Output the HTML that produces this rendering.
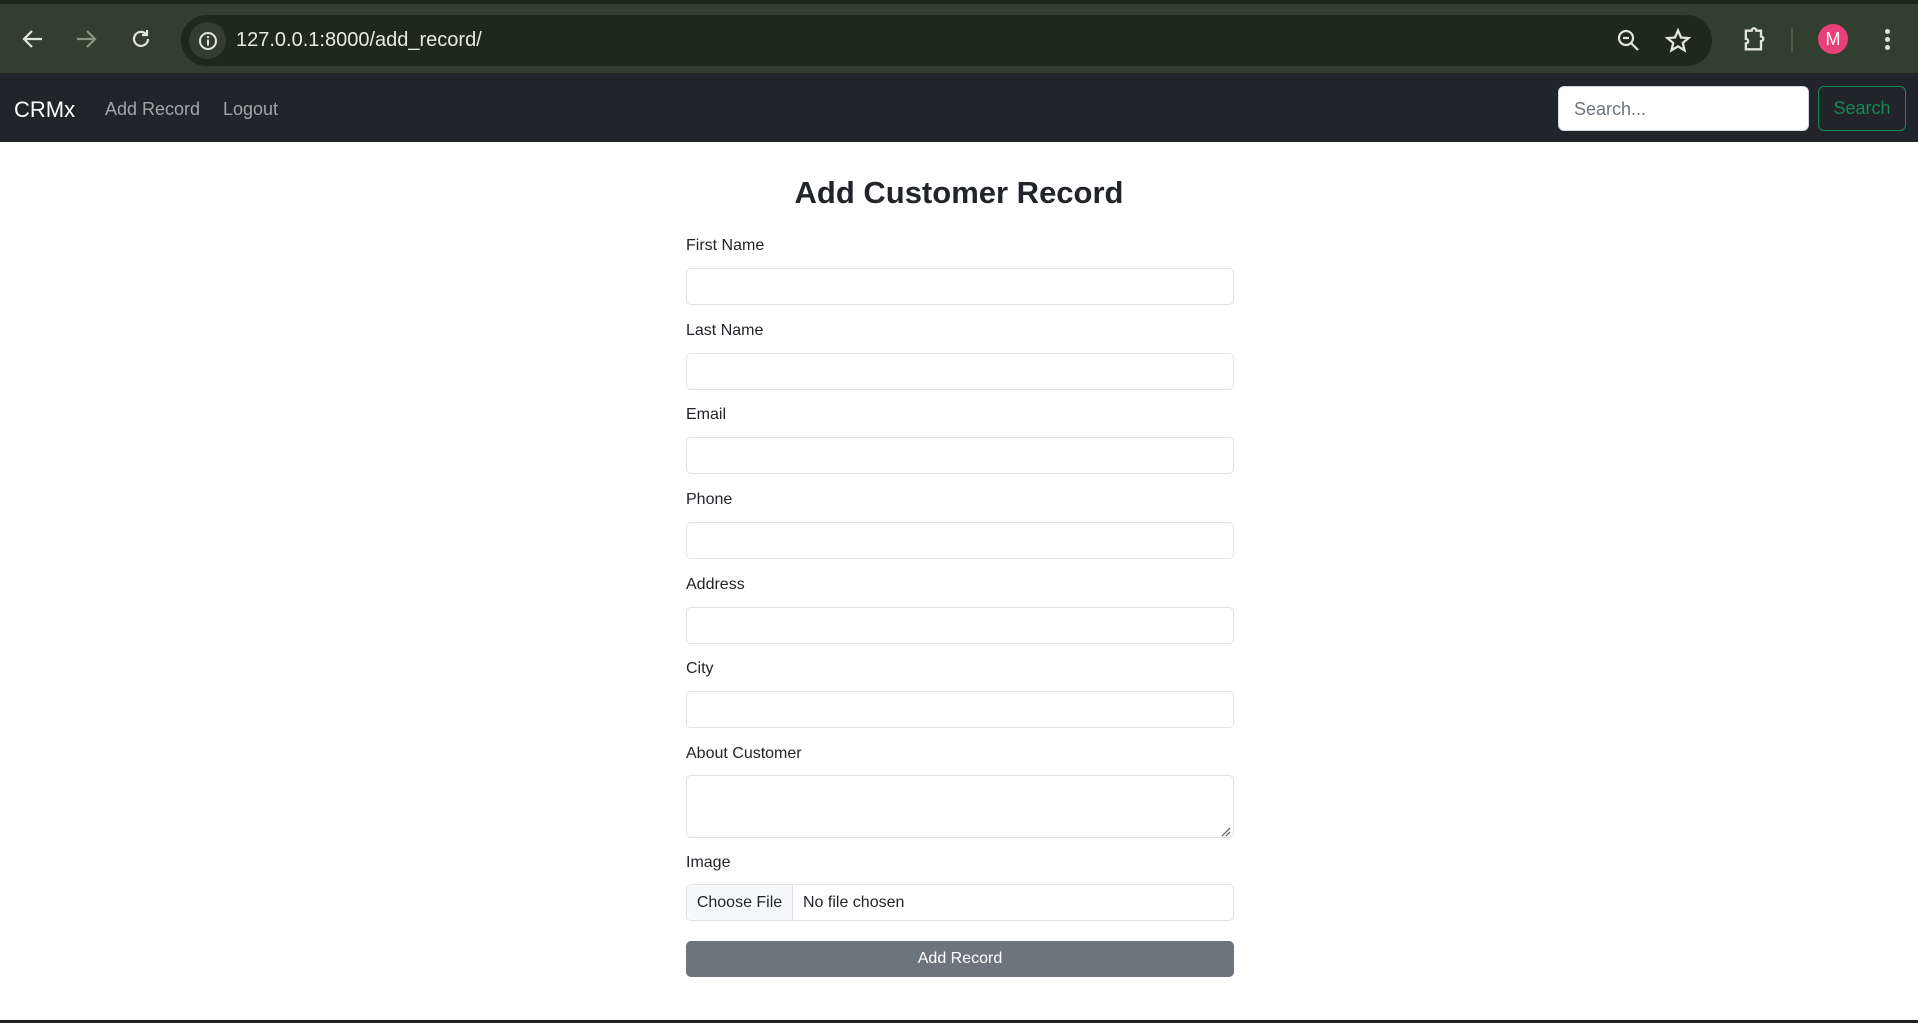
<!DOCTYPE html>
<html><head><meta charset="utf-8"><style>
*{box-sizing:border-box;margin:0;padding:0}
body{width:1918px;height:1023px;overflow:hidden;background:#fff;font-family:"Liberation Sans",sans-serif;position:relative;color:#212529}
.top{position:absolute;left:0;top:0;width:1918px;height:73px;background:#333f2e;border-top:4px solid #1c2617}
.addr{position:absolute;left:181px;top:11px;width:1531px;height:51px;background:#1e2a19;border-radius:26px}
.addr .ic{position:absolute;left:8px;top:7px;width:37px;height:37px;border-radius:50%;background:#333f2e}
.url{position:absolute;left:55px;top:14px;color:#e6eadf;font-size:20px}
.nav{position:absolute;left:0;top:73px;width:1918px;height:69px;background:#212529}
.nav span{position:absolute;top:26px;font-size:18px;color:#a2a5a8}
.in{position:absolute;left:686px;width:548px;height:37px;border:1px solid #dee2e6;border-radius:5px;background:#fff}
.lb{position:absolute;left:686px;font-size:16px;color:#212529}
svg{position:absolute}
</style></head><body>
<div class="top">
<div class="addr"><div class="ic"></div>
<svg style="left:17px;top:16px" width="20" height="20" viewBox="0 0 20 20"><circle cx="10" cy="10" r="8" fill="none" stroke="#dfe5d8" stroke-width="2"/><rect x="9" y="8.5" width="2" height="6" fill="#dfe5d8"/><rect x="9" y="5" width="2" height="2" fill="#dfe5d8"/></svg>
<div class="url">127.0.0.1:8000/add_record/</div>
<svg style="left:1435px;top:13px" width="26" height="26" viewBox="0 0 26 26"><circle cx="10" cy="10" r="7" fill="none" stroke="#dfe5d8" stroke-width="2.2"/><path d="M15 15l7 7M7 10h6" stroke="#dfe5d8" stroke-width="2.2"/></svg>
<svg style="left:1483px;top:12px" width="28" height="28" viewBox="0 0 24 24"><path d="M12 3l2.6 6 6.4.5-4.9 4.2 1.5 6.3L12 16.6 6.4 20l1.5-6.3L3 9.5l6.4-.5z" fill="none" stroke="#dfe5d8" stroke-width="2"/></svg>
</div>
<svg style="left:22px;top:24px" width="22" height="22" viewBox="0 0 22 22"><path d="M20 11H3M10 3l-8 8 8 8" fill="none" stroke="#dfe5d8" stroke-width="2.2"/></svg>
<svg style="left:75px;top:24px" width="22" height="22" viewBox="0 0 22 22"><path d="M2 11h17M12 3l8 8-8 8" fill="none" stroke="#8a9483" stroke-width="2.2"/></svg>
<svg style="left:130px;top:24px" width="22" height="22" viewBox="0 0 22 22"><path d="M18 11a7 7 0 1 1-2-5" fill="none" stroke="#dfe5d8" stroke-width="2.2"/><path d="M17 2v5h-5" fill="none" stroke="#dfe5d8" stroke-width="2.2"/></svg>
<svg style="left:1740px;top:22px" width="28" height="28" viewBox="0 0 24 24"><path d="M5 4h5a2 2 0 0 1 4 0h4v5a2 2 0 0 1 0 4v7H5v-5a2 2 0 0 0 0-4z" fill="none" stroke="#dfe5d8" stroke-width="2"/></svg>
<div style="position:absolute;left:1791px;top:24px;width:2px;height:24px;background:#4f5a49"></div>
<div style="position:absolute;left:1818px;top:20px;width:30px;height:30px;border-radius:50%;background:#e8407a;color:#fff;font-size:18px;text-align:center;line-height:30px">M</div>
<div style="position:absolute;left:1885px;top:25px;width:5px;height:5px;border-radius:50%;background:#dfe5d8;box-shadow:0 8px 0 #dfe5d8,0 16px 0 #dfe5d8"></div>
</div>
<div class="nav">
<span style="left:14px;top:24px;font-size:22px;color:#fff">CRMx</span>
<span style="left:105px">Add Record</span>
<span style="left:223px">Logout</span>
<div style="position:absolute;left:1558px;top:13px;width:251px;height:45px;background:#fff;border-radius:6px;border:1px solid #ced4da;padding:12px 15px;font-size:18px;color:#6c757d">Search...</div>
<div style="position:absolute;left:1818px;top:13px;width:88px;height:45px;border:1px solid #198754;border-radius:6px;font-size:18px;color:#198754;text-align:center;line-height:43px">Search</div>
</div>
<div style="position:absolute;left:0;width:1918px;top:175px;text-align:center;font-size:31px;font-weight:bold;color:#212529">Add Customer Record</div>
<div class="lb" style="top:237px">First Name</div><div class="in" style="top:268px"></div>
<div class="lb" style="top:322px">Last Name</div><div class="in" style="top:353px"></div>
<div class="lb" style="top:406px">Email</div><div class="in" style="top:437px"></div>
<div class="lb" style="top:491px">Phone</div><div class="in" style="top:522px"></div>
<div class="lb" style="top:576px">Address</div><div class="in" style="top:607px"></div>
<div class="lb" style="top:660px">City</div><div class="in" style="top:691px"></div>
<div class="lb" style="top:745px">About Customer</div><div class="in" style="top:775px;height:63px"></div>
<svg style="left:1219px;top:825px" width="12" height="12" viewBox="0 0 12 12"><path d="M11 3L3 11M11 7L7 11" stroke="#555" stroke-width="1.2"/></svg>
<div class="lb" style="top:854px">Image</div>
<div class="in" style="top:884px;overflow:hidden"><div style="position:absolute;left:0;top:0;width:106px;height:35px;background:#f8f9fa;border-right:1px solid #dee2e6;font-size:16px;line-height:35px;text-align:center">Choose File</div><div style="position:absolute;left:116px;top:0;font-size:16px;line-height:35px">No file chosen</div></div>
<div style="position:absolute;left:686px;top:941px;width:548px;height:36px;background:#6c757d;border-radius:5px;color:#fff;font-size:16px;text-align:center;line-height:36px">Add Record</div>
<div style="position:absolute;left:0;top:1020px;width:1918px;height:3px;background:#222"></div>
</body></html>
